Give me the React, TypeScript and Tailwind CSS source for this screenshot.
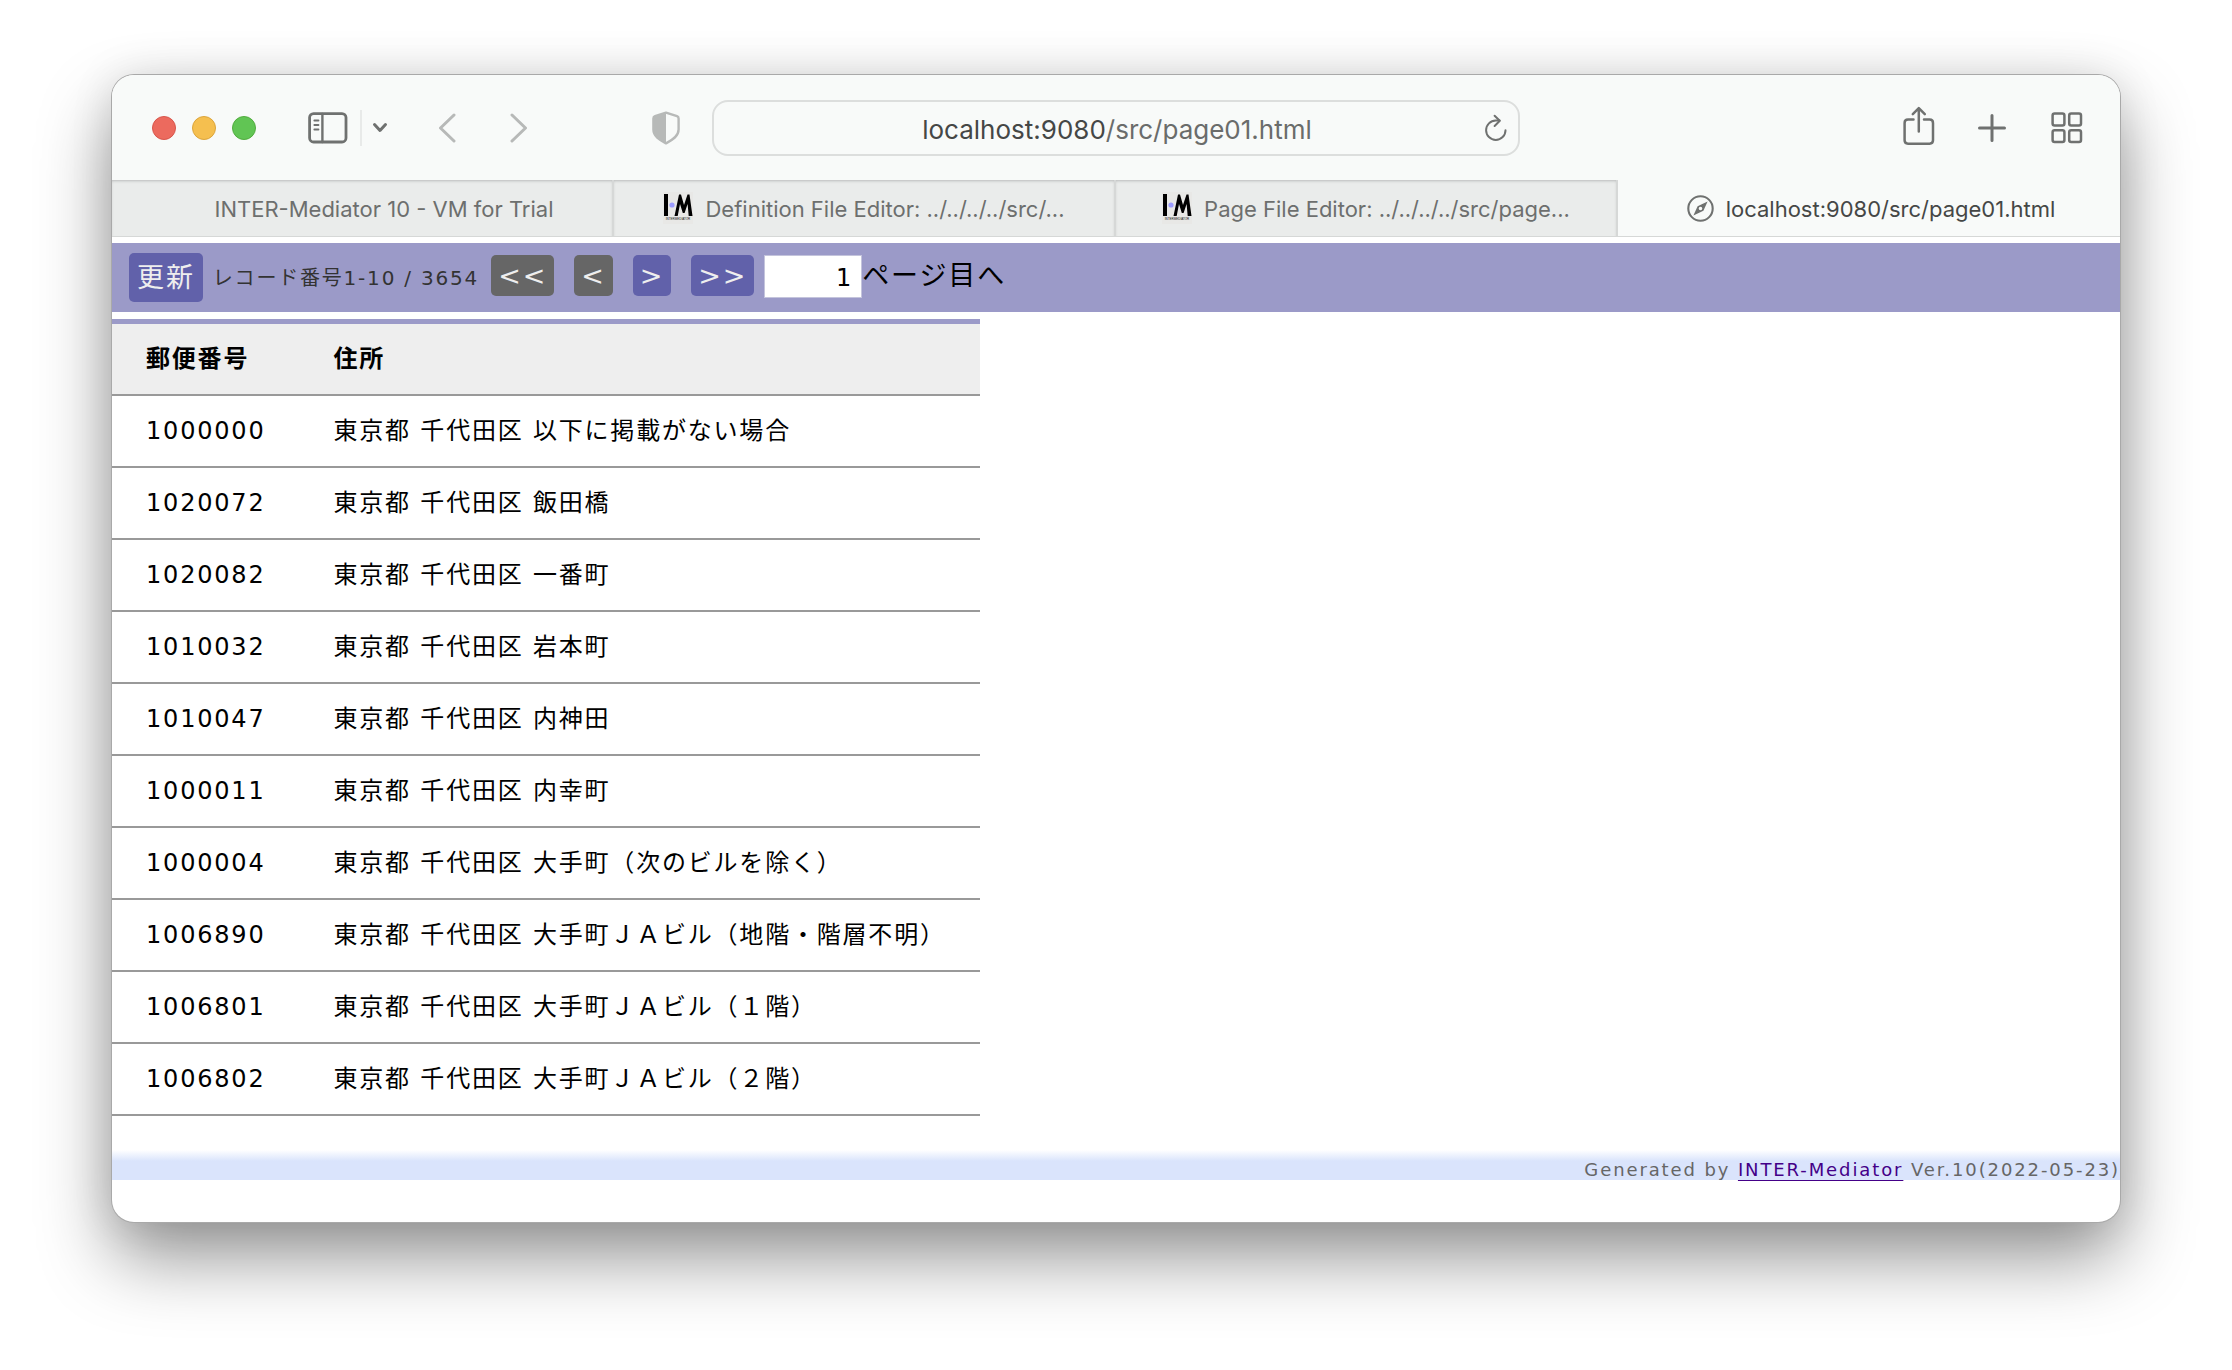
import React from 'react';

const rows = [
  ['1000000', '東京都 千代田区 以下に掲載がない場合'],
  ['1020072', '東京都 千代田区 飯田橋'],
  ['1020082', '東京都 千代田区 一番町'],
  ['1010032', '東京都 千代田区 岩本町'],
  ['1010047', '東京都 千代田区 内神田'],
  ['1000011', '東京都 千代田区 内幸町'],
  ['1000004', '東京都 千代田区 大手町（次のビルを除く）'],
  ['1006890', '東京都 千代田区 大手町ＪＡビル（地階・階層不明）'],
  ['1006801', '東京都 千代田区 大手町ＪＡビル（１階）'],
  ['1006802', '東京都 千代田区 大手町ＪＡビル（２階）'],
];

const stroke = {
  fill: 'none',
  stroke: 'currentColor',
  strokeLinecap: 'round' as const,
  strokeLinejoin: 'round' as const,
};

function SidebarIcon() {
  return (
    <svg width="40" height="32" viewBox="0 0 40 32" {...stroke} strokeWidth="2.8">
      <rect x="1.6" y="1.6" width="36.4" height="28.4" rx="4" />
      <path d="M14.4 2v28" strokeWidth="2.4" />
      <path d="M6.4 8.5h4M6.4 13h4M6.4 17.5h4" strokeWidth="2" />
    </svg>
  );
}

function ShieldIcon() {
  return (
    <svg width="28" height="34" viewBox="0 0 28 34">
      <path
        d="M14 1.6 25 5.2q1.6.6 1.6 2.2v11.2c0 6.6-6 10.4-12.6 13.8C7.4 29 1.4 25.2 1.4 18.6V7.4q0-1.6 1.6-2.2Z"
        {...stroke}
        strokeWidth="2.4"
      />
      <path d="M14 1.6 3 5.2Q1.4 5.8 1.4 7.4v11.2c0 6.6 6 10.4 12.6 13.8Z" fill="currentColor" />
    </svg>
  );
}

function ReloadIcon() {
  return (
    <svg width="24" height="28" viewBox="0 0 24 28" {...stroke} strokeWidth="2">
      <path d="M21.5 16.2A9.7 9.7 0 1 1 11.8 6.5H15.5" />
      <path d="M10.6 1.8 15.8 6.8 10.6 12" />
    </svg>
  );
}

function ShareIcon() {
  return (
    <svg width="32" height="40" viewBox="0 0 32 40" {...stroke} strokeWidth="2.5">
      <path d="M10.5 13.5H5q-3.4 0-3.4 3.4v17.4q0 3.4 3.4 3.4h21.6q3.4 0 3.4-3.4V16.9q0-3.4-3.4-3.4H21" />
      <path d="M15.8 25.5V2.5M9.8 8.2 15.8 2.2 21.8 8.2" />
    </svg>
  );
}

function PlusIcon() {
  return (
    <svg width="28" height="28" viewBox="0 0 28 28" {...stroke} strokeWidth="3">
      <path d="M14 1.5v25M1.5 14h25" />
    </svg>
  );
}

function GridIcon() {
  return (
    <svg width="32" height="32" viewBox="0 0 32 32" {...stroke} strokeWidth="2.5">
      <rect x="1.6" y="1.6" width="11.8" height="11.8" rx="2" />
      <rect x="18.2" y="1.6" width="11.8" height="11.8" rx="2" />
      <rect x="1.6" y="18.2" width="11.8" height="11.8" rx="2" />
      <rect x="18.2" y="18.2" width="11.8" height="11.8" rx="2" />
    </svg>
  );
}

function CompassIcon() {
  return (
    <svg width="27" height="27" viewBox="0 0 27 27" className="text-[#6f7170]">
      <circle cx="13.5" cy="13.5" r="12.2" {...stroke} strokeWidth="2.1" />
      <path
        fillRule="evenodd"
        fill="currentColor"
        d="M20.6 6.4 16.4 15.8 6.4 20.6 10.6 11.2ZM13.5 11.7a1.8 1.8 0 1 0 0 3.6 1.8 1.8 0 0 0 0-3.6Z"
      />
    </svg>
  );
}

function MediatorLogo() {
  return (
    <svg width="30" height="32" viewBox="0 0 30 32">
      <rect width="30" height="32" fill="#e8e8e6" />
      <rect x="1" y="2" width="4" height="22" fill="#000" />
      <circle cx="9" cy="13" r="2.6" fill="#9c9cff" />
      <path d="M11.5 24 16 2.500h2L21 13 24.5 2.500h2L29.500 24h-3.800L24.600 12 21.600 21h-1.800L17 12 14.700 24Z" fill="#000" />
      <text x="15" y="28" textAnchor="middle" fontSize="3" fontFamily="Liberation Sans" fill="#111">INTERMEDIATOR</text>
    </svg>
  );
}

function Tab({ icon, label, active }: { icon?: React.ReactNode; label: string; active?: boolean }) {
  return (
    <button
      type="button"
      role="tab"
      aria-selected={!!active}
      className={
        active
          ? 'flex h-full min-w-0 items-center justify-center gap-3 pl-1 text-[#454746]'
          : 'flex h-full min-w-0 items-center justify-center gap-3 border-r-2 border-[#d6d8d7] bg-[#eaeceb] text-[#6d6f6e] shadow-[inset_0_2px_3px_-1px_#b8baba]'
      }
    >
      {icon ?? <span className="w-8" />}
      <span className="whitespace-nowrap pt-[2px]">{label}</span>
    </button>
  );
}

function NavButton({ label, name, enabled }: { label: string; name: string; enabled?: boolean }) {
  return (
    <button
      type="button"
      aria-label={name}
      className={
        enabled
          ? 'h-[41px] rounded-[5px] bg-[#6161aa] px-[7px] leading-[41px] text-[#eee]'
          : 'h-[41px] rounded-[5px] bg-[#666] px-[7px] leading-[41px] text-[#eee]'
      }
    >
      {label}
    </button>
  );
}

export default function App() {
  return (
    <div className="min-h-screen bg-white px-28 pb-[148px] pt-[75px]">
      <main className="overflow-hidden rounded-[22px] bg-white shadow-[0_0_0_1px_#a9a9a9,0_36px_72px_rgba(0,0,0,0.42),0_0_44px_rgba(0,0,0,0.1)]">
        <header className="bg-[#f8faf9] font-['Inter',sans-serif]">
          <div className="grid h-[105px] grid-cols-[1fr_808px_1fr] items-center text-[#6f7170]">
            <div className="flex items-center pl-10 pr-8">
              <div className="flex gap-4">
                <button type="button" aria-label="Close" className="size-6 rounded-full border border-[#d8564c] bg-[#ec6a5e]" />
                <button type="button" aria-label="Minimize" className="size-6 rounded-full border border-[#dca53c] bg-[#f5bf4f]" />
                <button type="button" aria-label="Zoom" className="size-6 rounded-full border border-[#52ac3f] bg-[#61c554]" />
              </div>
              <button type="button" aria-label="Sidebar" className="ml-[52px]"><SidebarIcon /></button>
              <span className="ml-3 h-9 w-[2px] bg-[#e8eae9]" />
              <button type="button" aria-label="Tab groups" className="ml-[10px]">
                <svg width="16" height="12" viewBox="0 0 16 12" {...stroke} strokeWidth="3"><path d="M2.5 2.5 8 8.5 13.5 2.5" /></svg>
              </button>
              <button type="button" aria-label="Back" className="ml-[50px] text-[#b7b9b8]">
                <svg width="18" height="30" viewBox="0 0 18 30" {...stroke} strokeWidth="3"><path d="M16 2 2.5 15 16 28" /></svg>
              </button>
              <button type="button" aria-label="Forward" className="ml-[54px] text-[#b7b9b8]">
                <svg width="18" height="30" viewBox="0 0 18 30" {...stroke} strokeWidth="3"><path d="M2 2 15.5 15 2 28" /></svg>
              </button>
              <button type="button" aria-label="Privacy report" className="ml-auto text-[#b7b9b8]"><ShieldIcon /></button>
            </div>
            <div className="flex h-14 items-center rounded-2xl border-2 border-[#dcdedd] pl-3 pr-[10px]">
              <div className="w-6" />
              <a href="#address" className="flex-1 pt-1 text-center text-[26px] text-[#6a6c6b]">
                <span className="text-[#454746]">localhost:9080</span>/src/page01.html
              </a>
              <button type="button" aria-label="Reload"><ReloadIcon /></button>
            </div>
            <div className="flex items-center justify-end pr-[37px]">
              <button type="button" aria-label="Share" className="pb-1"><ShareIcon /></button>
              <button type="button" aria-label="New tab" className="ml-[43px]"><PlusIcon /></button>
              <button type="button" aria-label="Tab overview" className="ml-[45px]"><GridIcon /></button>
            </div>
          </div>
          <div role="tablist" className="grid h-[57px] grid-cols-4 border-b border-[#d6d8d7] text-[22px]">
            <Tab label="INTER-Mediator 10 - VM for Trial" />
            <Tab icon={<MediatorLogo />} label="Definition File Editor: ../../../../src/..." />
            <Tab icon={<MediatorLogo />} label="Page File Editor: ../../../../src/page..." />
            <Tab active icon={<CompassIcon />} label="localhost:9080/src/page01.html" />
          </div>
        </header>

        <div className="pb-[42px] pt-[6px] font-['DejaVu_Sans','Noto_Sans_CJK_JP',sans-serif] text-black">
          <nav className="flex h-[69px] items-center bg-[#9b9ac8] pl-[17px] text-[27px] tracking-[0.07em]">
            <button type="button" className="h-[49px] rounded-[5px] bg-[#6161aa] px-2 leading-[43px] text-[#eee]">更新</button>
            <span className="ml-[10px] whitespace-nowrap text-[20px] tracking-[0.09em] text-[#333]">レコード番号1-10 / 3654</span>
            <div className="mb-1 ml-3 flex items-center gap-5">
              <NavButton name="First page" label="<<" />
              <NavButton name="Previous page" label="<" />
              <NavButton name="Next page" label=">" enabled />
              <NavButton name="Last page" label=">>" enabled />
            </div>
            <label className="mb-[2px] ml-[10px] flex flex-row-reverse items-center whitespace-nowrap">
              ページ目へ
              <input type="text" defaultValue="1" className="h-[43px] w-[98px] border border-[#c4c4dc] bg-white pr-2 pt-[2px] text-right text-[24px]" />
            </label>
          </nav>

          <table className="mt-[7px] border-collapse text-left text-[24px] tracking-[0.075em]">
            <thead>
              <tr className="h-[73px] border-b-2 border-t-[5px] border-b-[#999] border-t-[#9b9ac8] bg-[#eee]">
                <th scope="col" className="px-[34px]">郵便番号</th>
                <th scope="col" className="px-[34px]">住所</th>
              </tr>
            </thead>
            <tbody>
              {rows.map(([code, address]) => (
                <tr key={code} className="h-[72px] border-b-2 border-[#999]">
                  <td className="px-[34px]">{code}</td>
                  <td className="whitespace-nowrap px-[34px]">{address}</td>
                </tr>
              ))}
            </tbody>
          </table>

          <footer className="mt-[34px] h-[30px] bg-[linear-gradient(#ffffff_0,#dae4fc_11px)] text-right text-[18px] leading-[40px] tracking-[0.105em] text-[#666]">
            Generated by <a href="#inter-mediator" className="text-[#440088] underline underline-offset-4">INTER-Mediator</a> Ver.10(2022-05-23)
          </footer>
        </div>
      </main>
    </div>
  );
}
